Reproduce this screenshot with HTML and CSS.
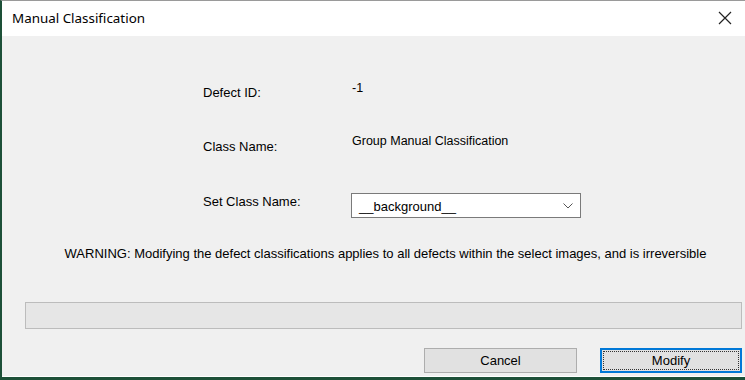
FILE: index.html
```html
<!DOCTYPE html>
<html lang="en">
<head>
  <meta charset="UTF-8" />
  <title>Manual Classification</title>
  <link rel="stylesheet" href="styles.css">
</head>
<body>

  <div class="window">
    <div class="titlebar">
      <span class="title">Manual Classification</span>
      <svg class="close" width="14" height="14" viewBox="0 0 14 14"><path d="M1 1L13 13M13 1L1 13" stroke="#222" stroke-width="1.2" fill="none"/></svg>
    </div>

    <div class="content">
      <div class="form">
        <div class="row row-id">
          <span class="label">Defect ID:</span>
          <span class="value">-1</span>
        </div>
        <div class="row row-class">
          <span class="label">Class Name:</span>
          <span class="value">Group Manual Classification</span>
        </div>
        <div class="row row-set">
          <span class="label">Set Class Name:</span>
          <div class="combo">
            <span>__background__</span>
            <svg width="10" height="6" viewBox="0 0 10 6"><path d="M0.5 0.5L5 5L9.5 0.5" stroke="#555" stroke-width="1" fill="none"/></svg>
          </div>
        </div>
      </div>

      <p class="warning">WARNING: Modifying the defect classifications applies to all defects within the select images, and is irreversible</p>

      <div class="progress"></div>

      <div class="buttons">
        <button class="btn">Cancel</button>
        <button class="btn btn-default"><span>Modify</span></button>
      </div>
    </div>
  </div>

</body>
</html>
```

FILE: styles.css
```css
* { margin: 0; padding: 0; box-sizing: border-box; }
body { width: 745px; height: 380px; overflow: hidden; background: #2b3a2f; font-family: 'Liberation Sans', Arial, sans-serif; font-size: 13px; color: #000; }
.window { width: 745px; height: 380px; border-left: 2px solid #1d5038; border-top: 1px solid #9a9a9a; border-bottom: 3px solid #1d5038; background: #f0f0f0; box-shadow: inset 0 -1px 0 #fff; }
.titlebar { height: 35px; background: #fff; display: flex; align-items: center; justify-content: space-between; padding: 0 13px 0 10px; }
.title { font-family: 'Noto Sans', 'Open Sans', sans-serif; font-size: 13.4px; color: #000; padding-bottom: 1px; }
.close { margin-top: -1px; }

.content { padding-top: 44px; }
.form { padding-left: 201px; }
.row { display: grid; grid-template-columns: 150px 228px; align-items: start; line-height: 15px; }
.row .value { font-size: 12.5px; margin-left: -1px; }
.row-id { height: 54px; }
.row-id .label { padding-top: 5px; }
.row-id .value { padding-top: 1px; }
.row-class { height: 59px; }
.row-class .label { padding-top: 5px; }
.row-set { height: 25px; }
.row-set .label { padding-top: 1px; }
.row-set .combo { margin-left: -2px; }
.combo { height: 25px; background: #fff; border: 1px solid #7a7a7a; display: flex; align-items: center; justify-content: space-between; padding: 2px 7px 0 7px; }
.combo svg { margin-top: -1px; }

.warning { text-align: center; line-height: 15px; margin-top: 28px; padding-left: 24px; }
.progress { margin: 41px 3px 0 23px; height: 27px; background: #e6e6e6; border: 1px solid #bcbcbc; }

.buttons { display: flex; gap: 23px; margin-top: 19px; padding-left: 422px; }
.btn { height: 25px; font-family: inherit; font-size: 13px; color: #000; background: #e1e1e1; border: 1px solid #adadad; }
.btn:first-child { width: 153px; }
.btn-default { width: 142px; border: 2px solid #0078d7; padding: 1px; }
.btn-default span { display: block; height: 100%; line-height: 17px; border: 1px dotted #333; }
```
